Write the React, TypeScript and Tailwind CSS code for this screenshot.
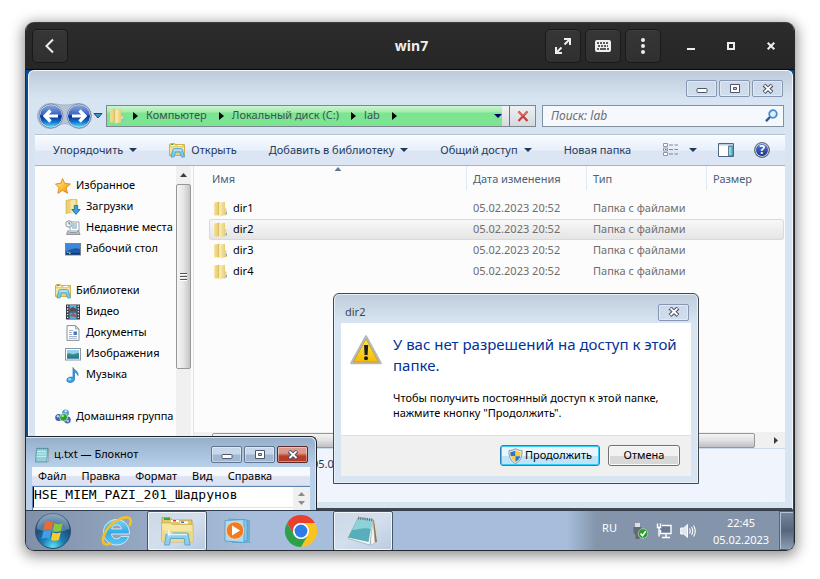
import type { ReactNode } from "react";

const UI = "font-['Noto_Sans','Open_Sans',sans-serif]";

/* ---------- small icons ---------- */

function FolderIcon({ className = "h-4 w-4" }: { className?: string }) {
  return (
    <svg viewBox="0 0 16 16" className={`shrink-0 ${className}`} aria-hidden="true">
      <defs>
        <linearGradient id="leaf" x1="0" y1="0" x2="1" y2="0">
          <stop offset="0" stopColor="#f3df94" />
          <stop offset=".6" stopColor="#ecd27a" />
          <stop offset="1" stopColor="#cfae4a" />
        </linearGradient>
        <linearGradient id="leaf2" x1="0" y1="0" x2="1" y2="0">
          <stop offset="0" stopColor="#fbf0bd" />
          <stop offset="1" stopColor="#e9cd72" />
        </linearGradient>
      </defs>
      <path d="M1.200 1.400 6.500.8v13.500l-5.300.3z" fill="url(#leaf)" />
      <path d="M6.200 1.800 12 .8v13.400l-5.800 1.300z" fill="url(#leaf2)" />
      <path d="M12 1.200v6l1.700 1v5.600l-1.700.4z" fill="#e0bf5c" />
      <path d="M12.500 8.500h1.200v4.500h-1.200z" fill="#f6f6ea" />
      <path d="M12.800 10.800h1v2.200h-1z" fill="#4fa4de" />
    </svg>
  );
}

function LibraryIcon() {
  return (
    <svg viewBox="0 0 16 16" className="h-4 w-4 shrink-0" aria-hidden="true">
      <path d="M.5 2.500 1.500 1.500h4l1 1h9v11H.500z" fill="#e8cd6d" stroke="#c3a442" strokeWidth=".8" />
      <path d="M2 3.500h4M8.500 3.500H13" stroke="#fff" strokeWidth="1.200" />
      <path d="M2.200 2.500h2" stroke="#36a53a" strokeWidth="1.200" />
      <path d="M1 5.200h14v6H1z" fill="#f5e5a0" />
      <path d="M3.500 8.600c0-1.400 1-2 2.200-2h5.800c1.200 0 2.200.600 2.200 2l1.800 6.400h-3l-1.500-4.800H6.500L5 15H2z" fill="#7dcbeb" stroke="#3d93bd" strokeWidth=".7" />
      <path d="M4.500 8h8" stroke="#d8f3fd" strokeWidth="1" />
    </svg>
  );
}

function StarIcon() {
  return (
    <svg viewBox="0 0 16 16" className="h-4 w-4 shrink-0" aria-hidden="true">
      <defs>
        <linearGradient id="star" x1="0" y1="0" x2="1" y2="1">
          <stop offset="0" stopColor="#fff29a" />
          <stop offset=".55" stopColor="#fdbc34" />
          <stop offset="1" stopColor="#ee8a1c" />
        </linearGradient>
      </defs>
      <path d="M7.600.6 9.700 5.400l5.700.6-4.300 3.800 1.500 5.500-5-2.900-4.700 3 1.200-5.600L.5 6l5.200-.6z" fill="url(#star)" stroke="#e08426" strokeWidth=".9" strokeLinejoin="round" />
    </svg>
  );
}

function DownloadsIcon() {
  return (
    <svg viewBox="0 0 16 16" className="h-4 w-4 shrink-0" aria-hidden="true">
      <path d="M1 1.500 5 .6h7v13H5l-4 1z" fill="#ecd170" stroke="#c9a843" strokeWidth=".6" />
      <path d="M5.500 1.500 10.500.8v12.700L5.500 15z" fill="#f6e6a2" />
      <path d="M9.300 6.500h3.400v4h2.500L11 15.400 6.800 10.500h2.500z" fill="#35a2e4" stroke="#15669f" strokeWidth=".8" />
    </svg>
  );
}

function RecentIcon() {
  return (
    <svg viewBox="0 0 16 16" className="h-4 w-4 shrink-0" aria-hidden="true">
      <path d="M5 2h9v9H5z" fill="#fff" stroke="#98a1a9" />
      <path d="M8 4h4M7 6h5M7 8h5" stroke="#5ba3b5" strokeWidth="1" />
      <circle cx="4" cy="4" r="3.200" fill="#f3f6f8" stroke="#8b949d" />
      <path d="M4 2v2h1.600" stroke="#51606c" fill="none" strokeWidth=".9" />
      <path d="m3 10.500-1.500 4h13.500L13.500 10.500l-2 2H5z" fill="#b9bdc2" stroke="#82888e" strokeWidth=".8" />
    </svg>
  );
}

function DesktopIcon() {
  return (
    <svg viewBox="0 0 16 16" className="h-4 w-4 shrink-0" aria-hidden="true">
      <rect x=".5" y="2.500" width="15" height="11.500" fill="#1e56a8" stroke="#768492" />
      <path d="M1 3h14v5C10 6 6 9 1 10z" fill="#3d86d8" />
      <path d="M1 12h14v1.500H1z" fill="#1a3460" />
      <path d="M2 10.500h1.500V12H2z" fill="#79c94f" />
      <path d="M4 11.500h1.500V13H4z" fill="#f0c944" />
    </svg>
  );
}

function VideoIcon() {
  return (
    <svg viewBox="0 0 16 16" className="h-4 w-4 shrink-0" aria-hidden="true">
      <rect x="1" y=".5" width="14" height="15" fill="#343b45" />
      <path d="M4.500 1h7v6.500h-7z" fill="#55b0e4" />
      <path d="M4.500 8.500h7V15h-7z" fill="#4ea9e1" />
      <path d="m4.500 5 3-2 4 2v2.500h-7z" fill="#5b4a56" />
      <path d="m4.500 12 3-3 4 2v2z" fill="#b3543c" />
      <path d="M2.700 1.500v14M13.300 1.500v14" stroke="#e7eef4" strokeWidth="1.300" strokeDasharray="1.400 1.400" />
    </svg>
  );
}

function DocumentIcon() {
  return (
    <svg viewBox="0 0 16 16" className="h-4 w-4 shrink-0" aria-hidden="true">
      <path d="M2 .6h8.500L14 4v11.400H2z" fill="#fdfefe" stroke="#8a9097" />
      <path d="M10.500.6V4H14z" fill="#d6dce2" stroke="#8a9097" strokeWidth=".7" />
      <path d="M4 5.500h4M4 7.500h3M4 9.500h3M4 11.500h8M4 13.300h8" stroke="#9aa6c4" strokeWidth=".9" />
      <path d="M8.500 6.500H12v3.500H8.500z" fill="#3f7fc2" />
    </svg>
  );
}

function PictureIcon() {
  return (
    <svg viewBox="0 0 16 16" className="h-4 w-4 shrink-0" aria-hidden="true">
      <rect x=".5" y="2.500" width="15" height="11.500" fill="#fff" stroke="#8d969f" />
      <rect x="2" y="4" width="12" height="8.500" fill="#8fd1f3" />
      <path d="M2 8c3-2 4 1 7 0s4-1 5-1v5.500H2z" fill="#3c8a78" />
      <path d="M2 10.500h12v2H2z" fill="#2577ad" />
    </svg>
  );
}

function MusicIcon() {
  return (
    <svg viewBox="0 0 16 16" className="h-4 w-4 shrink-0" aria-hidden="true">
      <path d="M8 .5c.5 2.500 5.500 3 5 8-.8-2-2-3-3.500-3.300V12c0 2-1.800 3.500-4.300 3.500-2.200 0-3.400-1-3.400-2.400 0-1.800 2-3 4.300-3 .7 0 1.300.1 1.900.4z" fill="#35a0e3" stroke="#1d73b3" strokeWidth=".7" />
      <ellipse cx="4.700" cy="12.300" rx="1.800" ry="1.100" fill="#a6dcf8" />
    </svg>
  );
}

function HomegroupIcon() {
  return (
    <svg viewBox="0 0 16 16" className="h-4 w-4 shrink-0" aria-hidden="true">
      <circle cx="10.500" cy="4" r="3.500" fill="#5f96dc" />
      <circle cx="3.800" cy="8.500" r="3.600" fill="#3d63bd" />
      <circle cx="12.400" cy="11" r="3.400" fill="#4b66bc" />
      <circle cx="8.600" cy="8.300" r="3.900" fill="#2ba02c" stroke="#e8f4ee" strokeWidth=".7" />
      <circle cx="7.600" cy="6.800" r="1.500" fill="#8fe07d" />
      <circle cx="2.900" cy="7.300" r="1.200" fill="#bcd3f6" />
      <circle cx="10.800" cy="2.300" r="1.200" fill="#cfe2fa" />
      <circle cx="12.800" cy="12" r="1.200" fill="#a7bdec" />
    </svg>
  );
}

function Caret({ className = "text-[#1e395b]" }: { className?: string }) {
  return (
    <svg viewBox="0 0 8 4" className={`h-1 w-2 shrink-0 ${className}`} aria-hidden="true">
      <path d="M0 0h8L4 4z" fill="currentColor" />
    </svg>
  );
}

/* ---------- window caption buttons ---------- */

type Glyph = "min" | "max" | "close";

function CaptionGlyph({ kind }: { kind: Glyph }) {
  return (
    <svg viewBox="0 0 12 10" className="h-[10px] w-3" aria-hidden="true">
      {kind === "min" && <rect x="1" y="4.500" width="10" height="4" rx=".8" fill="#fff" stroke="#4e5569" />}
      {kind === "max" && (
        <>
          <path d="M1.500.5h9v8h-9z" fill="#fff" stroke="#4e5569" />
          <path d="M4.500 3.500h3v2h-3z" fill="#c3d0e3" stroke="#4e5569" />
        </>
      )}
      {kind === "close" && (
        <>
          <path d="m2 1 8 7.500M10 1 2 8.500" stroke="#4e5569" strokeWidth="4" />
          <path d="m2.500 1.400 7 6.600M9.500 1.400 2.500 8" stroke="#fff" strokeWidth="1.900" />
        </>
      )}
    </svg>
  );
}

function CaptionButton({ kind, label, tone = "pale" }: { kind: Glyph; label: string; tone?: "pale" | "active" | "red" }) {
  const tones = {
    pale: "border-[#8796b3] bg-linear-to-b from-[#cdd9e7] to-[#cfdded]",
    active: "border-[#63768f] bg-linear-to-b from-[#c8d8ea] from-45% to-[#9fb9d5] to-55%",
    red: "border-[#5b2a2c] bg-linear-to-b from-[#dc9a8c] from-40% to-[#b93c26] to-60%",
  };
  return (
    <button type="button" aria-label={label} className={`flex h-[17px] w-[31px] items-center justify-center rounded-[2px] border shadow-[inset_0_0_0_1px_#ffffff66] ${tones[tone]}`}>
      <CaptionGlyph kind={kind} />
    </button>
  );
}

/* ---------- viewer header ---------- */

function HeaderButton({ label, children }: { label: string; children: ReactNode }) {
  return (
    <button type="button" aria-label={label} className="flex h-[34px] w-9 items-center justify-center rounded-[5px] border border-[#191919] bg-linear-to-b from-[#363636] to-[#303030] text-[#eeeeec] shadow-[inset_0_1px_#3c3c3c]">
      {children}
    </button>
  );
}

function ViewerHeader() {
  return (
    <header className="grid h-12 grid-cols-[1fr_auto_1fr] items-center border-t border-b border-t-[#3c3c3c] border-b-[#080808] bg-linear-to-b from-[#2c2c2c] to-[#262626] pr-[3px] pl-[6px] text-[#eeeeec]">
      <div>
        <HeaderButton label="Back">
          <svg viewBox="0 0 16 16" className="h-4 w-4" aria-hidden="true">
            <path d="M11 1.500 4.500 8l6.500 6.500" fill="none" stroke="currentColor" strokeWidth="2" />
          </svg>
        </HeaderButton>
      </div>
      <h1 className="text-[14px] leading-5 font-bold">win7</h1>
      <div className="flex items-center justify-end">
        <div className="flex gap-1">
          <HeaderButton label="Fullscreen">
            <svg viewBox="0 0 16 16" className="h-4 w-4" fill="none" stroke="currentColor" strokeWidth="2" aria-hidden="true">
              <path d="M9 1h6v6M15 1 9.500 6.500M7 15H1V9M1 15l5.500-5.500" />
            </svg>
          </HeaderButton>
          <HeaderButton label="Keyboard">
            <svg viewBox="0 0 16 16" className="h-4 w-4" aria-hidden="true">
              <rect y="2" width="16" height="12" rx="2" fill="currentColor" />
              <path d="M2 5h2m1 0h2m1 0h2m1 0h2M3 8h2m1 0h2m1 0h2m1 0h1M2 11h2m1 0h6m1 0h2" stroke="#2b2b2b" strokeWidth="1.600" />
            </svg>
          </HeaderButton>
          <HeaderButton label="Menu">
            <svg viewBox="0 0 16 16" className="h-4 w-4" fill="currentColor" aria-hidden="true">
              <circle cx="8" cy="2" r="2" />
              <circle cx="8" cy="8" r="2" />
              <circle cx="8" cy="14" r="2" />
            </svg>
          </HeaderButton>
        </div>
        <div className="ml-[10px] flex">
          <button type="button" aria-label="Minimize" className="flex h-9 w-10 items-center justify-center">
            <span className="mt-[6px] h-[2px] w-2 bg-current" />
          </button>
          <button type="button" aria-label="Maximize" className="flex h-9 w-10 items-center justify-center">
            <span className="h-2 w-2 border-2 border-current" />
          </button>
          <button type="button" aria-label="Close" className="flex h-9 w-10 items-center justify-center">
            <svg viewBox="0 0 8 8" className="h-2 w-2" aria-hidden="true">
              <path d="m.7.7 6.600 6.600M7.300.7.7 7.300" stroke="currentColor" strokeWidth="2" />
            </svg>
          </button>
        </div>
      </div>
    </header>
  );
}

/* ---------- explorer ---------- */

function NavOrbs() {
  return (
    <svg viewBox="0 0 56 26" className="h-[26px] w-14" aria-hidden="true">
      <defs>
        <linearGradient id="orb" x1="0" y1="0" x2="0" y2="1">
          <stop offset="0" stopColor="#8fa9dc" />
          <stop offset=".45" stopColor="#3561bd" />
          <stop offset=".5" stopColor="#0a2f8c" />
          <stop offset=".75" stopColor="#1173cf" />
          <stop offset="1" stopColor="#5fe3fb" />
        </linearGradient>
      </defs>
      <path d="M13 .5c6 0 8 1.500 15 1.500S37 .5 42 .5a12.500 12.500 0 0 1 0 25c-6 0-8-5-14-5s-8 5-15 5a12.500 12.500 0 0 1 0-25z" fill="#b7c4d6" stroke="#a3b2c8" />
      <circle cx="14" cy="13" r="11.500" fill="url(#orb)" stroke="#e0ecfa" />
      <circle cx="42" cy="13" r="11.500" fill="url(#orb)" stroke="#e0ecfa" />
      <circle cx="14" cy="13" r="12" fill="none" stroke="#4f6590" strokeWidth=".6" />
      <circle cx="42" cy="13" r="12" fill="none" stroke="#4f6590" strokeWidth=".6" />
      <path d="M21 13H8.500M13.500 7.500 8 13l5.500 5.500M35 13h12.500M42.500 7.500 48 13l-5.500 5.500" fill="none" stroke="#fff" strokeWidth="3.200" />
    </svg>
  );
}

function AddressBar() {
  const crumbs = ["Компьютер", "Локальный диск (C:)", "lab"];
  return (
    <nav aria-label="Адрес" className="flex h-[22px] flex-[428_1_0%] border border-[#7c8791] bg-linear-to-b from-[#f2f4f5] to-[#d6dbe0]">
      <div className="flex flex-1 items-center bg-linear-to-b from-[#cbf4d0] via-[#a3ecae] via-30% to-[#7ce591] to-35% pl-[2px] text-[11px] text-[#3f5056]">
        <FolderIcon />
        {crumbs.map((c) => (
          <span key={c} className="flex items-center">
            <svg viewBox="0 0 5 8" className="mr-2 ml-2 h-2 w-[5px]" aria-hidden="true">
              <path d="M0 0v8l5-4z" />
            </svg>
            <a href="#" className="mr-1 whitespace-nowrap">{c}</a>
          </span>
        ))}
        <svg viewBox="0 0 5 8" className="ml-2 h-2 w-[5px]" aria-hidden="true">
          <path d="M0 0v8l5-4z" />
        </svg>
        <button type="button" aria-label="Предыдущие расположения" className="ml-auto flex h-5 w-2 items-center">
          <Caret className="text-[#00006a]" />
        </button>
      </div>
      <span className="w-[7px]" />
      <button type="button" aria-label="Остановить" className="flex w-[26px] items-center justify-center border-l border-[#6f7478] bg-linear-to-b from-[#eef0f1] to-[#d4d9de]">
        <svg viewBox="0 0 12 12" className="h-3 w-3" aria-hidden="true">
          <path d="m1.500 1.500 9 9.500M10.500 1.500l-9 9.500" stroke="#c93b38" strokeWidth="2.200" />
          <path d="m1.500 1.500 4 4M10.500 1.500l-4 4" stroke="#e5736c" strokeWidth="1.200" />
        </svg>
      </button>
    </nav>
  );
}

function Toolbar() {
  const item = "flex h-full items-center gap-[6px] whitespace-nowrap";
  return (
    <div className="flex h-8 items-center border-t border-b border-t-[#b4c3d5] border-b-[#a3b3ca] bg-linear-to-b from-[#fafcff] via-[#e7effa] via-50% to-[#dbe5f3] to-55% pr-[15px] pl-[18px] text-[11px] text-[#1e395b] shadow-[inset_0_1px_#fff]">
      <button type="button" className={item}>Упорядочить <Caret /></button>
      <button type="button" className={`${item} ml-8`}><LibraryIcon /> Открыть</button>
      <button type="button" className={`${item} ml-8`}>Добавить в библиотеку <Caret /></button>
      <button type="button" className={`${item} ml-8`}>Общий доступ <Caret /></button>
      <button type="button" className={`${item} ml-8`}>Новая папка</button>
      <div className="ml-auto flex items-center">
        <button type="button" aria-label="Вид" className="flex items-center gap-[10px]">
          <svg viewBox="0 0 16 14" className="h-[14px] w-4" aria-hidden="true">
            <path d="M.5.500h4v3h-4zM.500 5h4v3h-4zM.500 9.500h4v3h-4z" fill="#fff" stroke="#8b97a8" />
            <path d="M2 6h1.500v1H2z" fill="#c54733" />
            <path d="M6 2h4M11.500 2H15M6 6.500h4M11.500 6.500H15M6 11h4M11.500 11H15" stroke="#7787a0" />
          </svg>
          <Caret />
        </button>
        <button type="button" aria-label="Область просмотра" className="ml-[21px]">
          <svg viewBox="0 0 16 14" className="h-[14px] w-4" aria-hidden="true">
            <path d="M.5.500h15v13H.5z" fill="#fff" stroke="#4d6782" />
            <path d="M1 1h14v1.500H1z" fill="#b9cde0" />
            <path d="M10.500 3h4.500v10h-4.500z" fill="#59bedb" stroke="#4d6782" strokeWidth=".8" />
            <path d="M12 4v8" stroke="#bdeaf5" />
          </svg>
        </button>
        <button type="button" aria-label="Справка" className="ml-5 flex h-4 w-4 items-center justify-center rounded-full border border-[#6c727c] bg-[#2349b0] bg-linear-to-b from-[#5a80dd] to-[#142f86] text-[12px] leading-none font-bold text-white shadow-[inset_0_0_0_1px_#c9cfd8]">
          ?
        </button>
      </div>
    </div>
  );
}

type NavGroup = { title: string; icon: ReactNode; items: { name: string; icon: ReactNode }[] };

const navGroups: NavGroup[] = [
  {
    title: "Избранное",
    icon: <StarIcon />,
    items: [
      { name: "Загрузки", icon: <DownloadsIcon /> },
      { name: "Недавние места", icon: <RecentIcon /> },
      { name: "Рабочий стол", icon: <DesktopIcon /> },
    ],
  },
  {
    title: "Библиотеки",
    icon: <LibraryIcon />,
    items: [
      { name: "Видео", icon: <VideoIcon /> },
      { name: "Документы", icon: <DocumentIcon /> },
      { name: "Изображения", icon: <PictureIcon /> },
      { name: "Музыка", icon: <MusicIcon /> },
    ],
  },
  { title: "Домашняя группа", icon: <HomegroupIcon />, items: [] },
];

function NavPane() {
  return (
    <div className="flex w-[159px] shrink-0 border-r border-[#d6e5f5] bg-[#fcfcfc]">
      <div className="flex flex-1 flex-col gap-[21px] overflow-hidden pt-[9px] pb-[21px] pl-5 text-[11px] text-black">
        {navGroups.map((g) => (
          <div key={g.title}>
            <a href="#" className="flex h-[21px] items-center gap-[5px] whitespace-nowrap">{g.icon}<span>{g.title}</span></a>
            {g.items.map((it) => (
              <a key={it.name} href="#" className="flex h-[21px] items-center gap-[5px] pl-[10px] whitespace-nowrap">{it.icon}<span>{it.name}</span></a>
            ))}
          </div>
        ))}
      </div>
      <div className="mr-[2px] flex w-[15px] shrink-0 flex-col bg-[#f0f0f0]">
        <span className="flex h-[18px] items-center justify-center">
          <svg viewBox="0 0 7 4" className="h-1 w-[7px]" aria-hidden="true"><path d="M0 4h7L3.500 0z" fill="#3c3c3c" /></svg>
        </span>
        <span className="flex h-[185px] flex-col items-center justify-center gap-px rounded-[2px] border border-[#979797] bg-linear-to-r from-[#f5f5f5] via-[#e6e6e7] to-[#c3c4c8]">
          <i className="h-[2px] w-[7px] border-b border-white bg-[#555]" />
          <i className="h-[2px] w-[7px] border-b border-white bg-[#555]" />
          <i className="h-[2px] w-[7px] border-b border-white bg-[#555]" />
        </span>
      </div>
    </div>
  );
}

const files = ["dir1", "dir2", "dir3", "dir4"];

function FileList() {
  const th = "relative h-6 border-r border-[#dfeaf7] p-0 pt-[2px] pl-[6px] text-left font-normal";
  return (
    <div className="flex min-w-0 flex-1 flex-col bg-[#fcfcfc] text-[11px]">
      <div className="overflow-hidden pr-px pl-[15px]">
        <table className="w-full table-fixed border-separate border-spacing-0">
          <colgroup>
            <col className="w-[258px]" />
            <col className="w-[120px]" />
            <col className="w-[120px]" />
            <col />
          </colgroup>
          <thead className="text-[#4c607a]">
            <tr>
              <th className="relative h-6 border-r border-[#dfeaf7] p-0 pt-[2px] pl-[3px] text-left font-normal">
                Имя
                <svg viewBox="0 0 7 4" className="absolute top-px left-1/2 h-1 w-[7px] -translate-x-1/2" aria-hidden="true"><path d="M0 4h7L3.500 0z" fill="#5c7b9c" /></svg>
              </th>
              <th className={th}>Дата изменения</th>
              <th className={th}>Тип</th>
              <th className="h-6 p-0 pt-[2px] pl-[6px] text-left font-normal">Размер</th>
            </tr>
            <tr aria-hidden="true"><td className="h-2 p-0" /></tr>
          </thead>
          <tbody>
            {files.map((f) => {
              const on = f === "dir2";
              const cell = on ? "border-y border-[#d9d9d9] bg-linear-to-b from-[#f8f8f8] to-[#e5e5e5]" : "border-y border-transparent";
              return (
                <tr key={f} className="h-[21px]">
                  <td className={`${cell} rounded-l-[3px] border-l p-0 pl-[3px] text-black`}>
                    <span className="flex h-[19px] items-center gap-1"><FolderIcon />{f}</span>
                  </td>
                  <td className={`${cell} p-0 pl-[6px] text-[#6d6d6d]`}>05.02.2023 20:52</td>
                  <td className={`${cell} p-0 pl-[6px] text-[#6d6d6d]`}>Папка с файлами</td>
                  <td className={`${cell} rounded-r-[3px] border-r p-0`} />
                </tr>
              );
            })}
          </tbody>
        </table>
      </div>
      <div className="mt-auto flex h-4 items-center bg-[#f0f0f0]">
        <span className="ml-[18px] h-[15px] flex-1 rounded-[2px] border border-[#979797] bg-linear-to-b from-[#f4f4f4] via-[#e0e0e1] to-[#bfc0c4]" />
        <span className="flex w-[30px] items-center justify-end pr-[7px]">
          <svg viewBox="0 0 4 7" className="h-[7px] w-1" aria-hidden="true"><path d="M0 0v7l4-3.500z" fill="#3c3c3c" /></svg>
        </span>
      </div>
    </div>
  );
}

function Explorer() {
  return (
    <section aria-label="lab" className="mr-px ml-[2px] rounded-t-[6px] border border-b-2 border-[#f3f7fb] border-b-[#45474c] bg-[#d7e4f1] bg-linear-to-b from-[#becbda] to-[#d7e4f1] to-[28px] pr-[7px] pb-[6px] pl-[6px]">
      <div className="flex justify-end gap-[2px] pt-[9px] pr-[2px]">
        <CaptionButton kind="min" label="Свернуть" />
        <CaptionButton kind="max" label="Развернуть" />
        <CaptionButton kind="close" label="Закрыть" />
      </div>
      <div className="flex h-[37px] items-center pr-px pl-[2px]">
        <button type="button" aria-label="Назад и вперёд"><NavOrbs /></button>
        <svg viewBox="0 0 10 6" className="mr-[3px] h-[6px] w-[10px]" aria-hidden="true">
          <path d="M1 .5h8L5 5z" fill="#3f93cc" stroke="#26486f" />
        </svg>
        <AddressBar />
        <label className="ml-[6px] flex h-[22px] flex-[227_1_0%] items-center border border-[#8491a1] bg-[#f5f9fd] pr-[5px] pl-2">
          <input aria-label="Поиск" placeholder="Поиск: lab" className="w-full min-w-0 bg-transparent text-[12px] italic outline-none placeholder:text-[#6d6d6d]" />
          <svg viewBox="0 0 13 13" className="h-[13px] w-[13px] shrink-0" aria-hidden="true">
            <circle cx="8" cy="5" r="3.800" fill="#dff0fc" stroke="#3f8fd2" strokeWidth="1.800" />
            <path d="m5 8-4 4.200" stroke="#2a58a5" strokeWidth="2.400" />
          </svg>
        </label>
      </div>
      <Toolbar />
      <div className="flex">
        <NavPane />
        <FileList />
      </div>
      <div className="h-[54px] border-t border-[#cddcec] bg-[#f0f4fc] pt-[6px] pl-[277px] text-[11px] leading-[18px] text-[#1e395b]">05.02.2023</div>
    </section>
  );
}

/* ---------- access dialog ---------- */

function AccessDialog() {
  return (
    <div role="dialog" aria-label="dir2" className="absolute top-[223px] left-[307px] w-[366px] rounded-t-[6px] border border-[#44484e] bg-linear-to-b from-[#becddc] to-[#d7e4f1] to-[28px] px-[7px] pb-[7px] shadow-[inset_0_0_0_1px_#e9f1f8]">
      <div className="flex h-[29px] items-center justify-between pt-[7px] pr-[2px] pl-1 text-[11px] text-[#3a4654]">
        <span>dir2</span>
        <CaptionButton kind="close" label="Закрыть" />
      </div>
      <div className="flex gap-[11px] border-b border-[#dfdfdf] bg-white pt-[11px] pb-[15px] pl-[9px]">
        <svg viewBox="0 0 32 32" className="h-8 w-8 shrink-0" aria-hidden="true">
          <defs>
            <linearGradient id="warn" x1="0" y1="0" x2="0" y2="1">
              <stop offset="0" stopColor="#fdf05a" />
              <stop offset="1" stopColor="#f5b800" />
            </linearGradient>
          </defs>
          <path d="M16 2.500 30.500 29h-29z" fill="url(#warn)" stroke="#b5b8bc" strokeWidth="2.600" strokeLinejoin="round" />
          <path d="M16 5 28.500 28h-25z" fill="none" stroke="#d09a00" strokeWidth=".7" />
          <path d="M14 11h4.200l-.6 10h-3z" fill="#1d1d1d" />
          <circle cx="16" cy="24.300" r="2" fill="#1d1d1d" />
        </svg>
        <div className="min-w-0 flex-1 pr-1">
          <p className="text-[15px] leading-[21px] text-[#003399]">У вас нет разрешений на доступ к этой папке.</p>
          <p className="mt-[14px] text-[11px] leading-[15px] text-black">Чтобы получить постоянный доступ к этой папке, нажмите кнопку "Продолжить".</p>
        </div>
      </div>
      <div className="flex justify-end gap-2 bg-[#f0f0f0] pt-[9px] pr-[11px] pb-[10px] text-[11px] text-black">
        <button type="button" className="flex h-[21px] w-[100px] items-center justify-center gap-[2px] rounded-[3px] border border-[#2c7fb8] bg-linear-to-b from-[#eaf6fd] from-50% to-[#bfe3f7] to-55% whitespace-nowrap shadow-[inset_0_0_0_1px_#35cdf8]">
          <svg viewBox="0 0 15 16" className="h-4 w-[15px] shrink-0" aria-hidden="true">
            <path d="M7.500.7C9.500 2 11.500 2.500 14 2.500c.4 6-1.500 10.500-6.500 13C2.500 13 .6 8.500 1 2.500c2.500 0 4.500-.5 6.500-1.800z" fill="#e9edf2" stroke="#8c949e" />
            <path d="M7.500 2.600v5.600H2.700C2.300 6.500 2.300 5 2.400 3.900c2 0 3.600-.4 5.100-1.300z" fill="#3173c6" />
            <path d="M7.500 2.600v5.600h4.800c.4-1.700.4-3.200.3-4.300-2 0-3.600-.4-5.100-1.300z" fill="#f7cf3c" />
            <path d="M2.700 8.200h4.800v5.700c-2.500-1.300-4-3.200-4.800-5.700z" fill="#f7cf3c" />
            <path d="M12.300 8.200H7.500v5.700c2.500-1.300 4-3.200 4.800-5.700z" fill="#3173c6" />
          </svg>
          Продолжить
        </button>
        <button type="button" className="h-[21px] w-[72px] rounded-[3px] border border-[#707070] bg-linear-to-b from-[#f1f1f1] from-50% to-[#d8d8d8] to-55% shadow-[inset_0_0_0_1px_#fafafa]">Отмена</button>
      </div>
    </div>
  );
}

/* ---------- notepad ---------- */

function Notepad() {
  return (
    <section aria-label="Блокнот" className="absolute bottom-0 -left-px w-[292px] rounded-tr-[6px] border border-b-0 border-[#22262b] bg-linear-to-b from-[#94aeca] to-[#b9d0ea] to-[30px] px-[6px] shadow-[inset_-1px_1px_#d5e7f5]">
      <div className="flex h-[30px] items-center pt-[5px] pr-[2px] pl-[2px] text-[11px] text-black">
        <svg viewBox="0 0 16 16" className="mr-1 h-4 w-4" aria-hidden="true">
          <path d="M2.500 1.500h11.500l-1 13.500H1.500z" fill="#8fd0da" stroke="#5b8e99" strokeWidth=".8" />
          <path d="M14 1.500l.8 13L13 15z" fill="#e8ecef" stroke="#777" strokeWidth=".5" />
          <path d="M3 4.500h9M3 7h9M2.700 9.500H12" stroke="#c4ecf0" />
          <path d="M3 1.500h11" stroke="#74808a" strokeWidth="1.600" strokeDasharray="1 1" />
        </svg>
        <span className="flex-1">ц.txt — Блокнот</span>
        <div className="flex gap-[2px]">
          <CaptionButton kind="min" label="Свернуть" tone="active" />
          <CaptionButton kind="max" label="Развернуть" tone="active" />
          <CaptionButton kind="close" label="Закрыть" tone="red" />
        </div>
      </div>
      <div className="flex h-[19px] items-center justify-start gap-[15px] border-b border-[#cfd5e4] bg-linear-to-b from-[#f6f9fd] from-45% to-[#dde3f2] to-55% pl-[6px] text-[11px] text-black">
        {["Файл", "Правка", "Формат", "Вид", "Справка"].map((m) => (
          <button key={m} type="button">{m}</button>
        ))}
      </div>
      <div className="flex h-6 border-t border-l border-[#5f84b0] bg-white">
        <textarea aria-label="Текст" spellCheck={false} rows={1} defaultValue="HSE_MIEM_PAZI_201_Шадрунов" className="h-[21px] min-w-0 flex-1 resize-none overflow-hidden border-b border-l border-b-[#e3e3e3] border-l-black bg-white font-['DejaVu_Sans_Mono',monospace] text-[13px] leading-4 text-black outline-none" />
        <span className="flex w-[17px] flex-col items-center justify-between bg-[#f0f0f0] py-[5px]">
          <svg viewBox="0 0 7 4" className="h-1 w-[7px]" aria-hidden="true"><path d="M0 4h7L3.500 0z" fill="#8c8c8c" /></svg>
          <svg viewBox="0 0 7 4" className="h-1 w-[7px]" aria-hidden="true"><path d="M0 0h7L3.500 4z" fill="#8c8c8c" /></svg>
        </span>
      </div>
    </section>
  );
}

/* ---------- taskbar ---------- */

function StartOrb() {
  return (
    <svg viewBox="0 0 38 38" className="h-[38px] w-[38px]" aria-hidden="true">
      <defs>
        <radialGradient id="start" cx=".5" cy=".95" r=".9">
          <stop offset="0" stopColor="#59e2f8" />
          <stop offset=".35" stopColor="#1c7db5" />
          <stop offset=".7" stopColor="#1d4f7d" />
          <stop offset="1" stopColor="#5f86a8" />
        </radialGradient>
      </defs>
      <circle cx="19" cy="19" r="17.500" fill="url(#start)" stroke="#2f4a68" />
      <path d="M3 17a16 16 0 0 1 32 0c-8 4-22 4-32 0z" fill="#fff" opacity=".25" />
      <path d="M11 10.500c3-1.700 5.500-1.500 8 0l-1.500 7.500c-2.500-1.500-5-1.500-8 0z" fill="#ed6a30" />
      <path d="M20.300 11.200c2.700 1.400 5.400 1.300 8.300 0L27 18.800c-2.800 1.300-5.500 1.300-8.200 0z" fill="#8cc63f" />
      <path d="M9.200 19.500c3-1.500 5.500-1.400 8 0L15.600 27c-2.500-1.500-5-1.500-8 0z" fill="#3fa0e4" />
      <path d="M18.500 20.200c2.700 1.400 5.400 1.300 8.300 0L25 27.800c-2.800 1.300-5.500 1.300-8 0z" fill="#fbca2b" />
    </svg>
  );
}

function IEIcon() {
  return (
    <svg viewBox="0 0 32 32" className="h-8 w-8" aria-hidden="true">
      <defs>
        <linearGradient id="ie" x1="0" y1="0" x2="0" y2="1">
          <stop offset="0" stopColor="#7ed3f7" />
          <stop offset=".5" stopColor="#35ace8" />
          <stop offset="1" stopColor="#55c8f4" />
        </linearGradient>
      </defs>
      <path d="M29.500 19H11.500c.3 3 2.300 4.800 5 4.800 2 0 3.500-.8 4.500-2.400h7.700C27 26.500 22.800 30 16.500 30 9.300 30 3.500 25 3.500 17.300S9.500 4.500 16.700 4.500 29.500 10 29.500 19zm-17.800-5.100h9.800c-.3-2.600-2.200-4-4.800-4s-4.500 1.500-5 4z" fill="url(#ie)" stroke="#e9f8ff" strokeWidth=".8" />
      <path d="M29.500 11c2-4.500 1.500-8-1.500-8.500-5.500-1-16.500 5-22 13.500-4 6.300-4.500 13 .5 13.500 1.500 0 3-.5 4.500-1.300" fill="none" stroke="#f4c02a" strokeWidth="2.600" />
    </svg>
  );
}

function ExplorerTaskIcon() {
  return (
    <svg viewBox="0 0 34 30" className="h-[30px] w-[34px]" aria-hidden="true">
      <path d="M2 4V1.500h8L12 4h20v21H2z" fill="#e3c76b" stroke="#b59843" strokeWidth=".8" />
      <path d="M4 2h6v2H4z" fill="#2caa3c" />
      <path d="M11 4h8v2h-8z" fill="#fff" /><path d="M13 4h3v1.500h-3z" fill="#d93a2b" />
      <path d="M20 5.500h8v2h-8z" fill="#fff" /><path d="M21 5.500h3V7h-3z" fill="#2a7dd2" />
      <path d="M1.500 7h9l2 1.500h20.500v17.500h-31z" fill="#f7e6a1" stroke="#c9ad55" strokeWidth=".7" />
      <path d="M1.800 15h31v10.500h-31z" fill="#eed78a" />
      <path d="M6 19c0-1.500 1-2 2.300-2h18c1.200 0 2.200.5 2.200 2l1.500 10h-5l-.8-6.500h-13.700L9.500 29h-5z" fill="#8ad0ee" stroke="#4c9ec6" strokeWidth=".8" />
      <path d="M8 18.500h19" stroke="#dcf4fd" strokeWidth="1.300" />
      <path d="m9 12 .8 4.200 4.200.8-4.200.8L9 22l-.8-4.200L4 17l4.200-.8z" fill="#fff" opacity=".85" />
    </svg>
  );
}

function PlayerIcon() {
  return (
    <svg viewBox="0 0 30 28" className="h-7 w-[30px]" aria-hidden="true">
      <path d="m8 2 18 1v22l2 1H8z" fill="#67a8ce" opacity=".8" />
      <path d="m5 2 18 1v21H5z" fill="#8cc9e8" stroke="#4d98c4" strokeWidth=".7" />
      <path d="M1 3.500 20 2.500v23L1 24z" fill="#a9dbf2" stroke="#4d98c4" strokeWidth=".8" />
      <circle cx="11" cy="13.500" r="8.800" fill="#f07b22" stroke="#fbd9b8" />
      <path d="m8 8.500 8 5-8 5z" fill="#fff" />
    </svg>
  );
}

function ChromeIcon() {
  return (
    <svg viewBox="0 0 32 32" className="h-8 w-8" aria-hidden="true">
      <path d="M16 8h13.860A16 16 0 0 1 16 32l6.930-12z" fill="#fcc31e" />
      <path d="M2.140 8A16 16 0 0 1 29.860 8H16a8 8 0 0 0-6.930 12z" fill="#e8402f" />
      <path d="M2.140 8 9.070 20A8 8 0 0 0 22.930 20L16 32A16 16 0 0 1 2.140 8z" fill="#2da04b" />
      <circle cx="16" cy="16" r="8" fill="#fff" />
      <circle cx="16" cy="16" r="6.400" fill="#2f7bea" />
    </svg>
  );
}

function NotepadTaskIcon() {
  return (
    <svg viewBox="0 0 32 30" className="h-[30px] w-8" aria-hidden="true">
      <path d="m27 4 3 22-4 .5-2-20z" fill="#9a7440" />
      <path d="m26 3.500 2 23-4 3-2-22z" fill="#f3f4f3" stroke="#9b9b9b" strokeWidth=".5" />
      <path d="m11 2 15 2-3 25L1 22.500z" fill="#f3f7f8" stroke="#8c9ba1" strokeWidth=".6" />
      <path d="m11 2 14.500 2-4 22L1 21.500z" fill="#58aebb" />
      <path d="m11 2 14.500 2-1.500 9C17 11 11 14 5 14z" fill="#9bdbe1" opacity=".8" />
      <path d="m11 2 15 2" stroke="#6c7075" strokeWidth="2.600" strokeDasharray="1.200 1" />
    </svg>
  );
}

function Taskbar() {
  const running = "flex h-10 w-[60px] items-center justify-center rounded-[2px] border border-[#46566b] bg-linear-to-br from-[#ccd8e6] via-[#d3dfec] to-[#b9cbe0] shadow-[inset_0_0_0_1px_#f0f5fb]";
  return (
    <footer className="flex h-10 items-stretch border-t border-[#2f3d50] bg-linear-to-r from-[#8090a8] via-[#a6bedb] via-[220px] to-[#a6bedb] text-white">
      <div className="flex items-center pl-2">
        <button type="button" aria-label="Пуск"><StartOrb /></button>
        <button type="button" aria-label="Internet Explorer" className="ml-7"><IEIcon /></button>
        <button type="button" aria-label="Проводник" className={`${running} ml-[15px]`}><ExplorerTaskIcon /></button>
        <button type="button" aria-label="Проигрыватель" className="ml-[17px]"><PlayerIcon /></button>
        <button type="button" aria-label="Chrome" className="ml-[31px]"><ChromeIcon /></button>
        <button type="button" aria-label="Блокнот" className={`${running} ml-4`}><NotepadTaskIcon /></button>
      </div>
      <div className="ml-auto flex items-center bg-linear-to-r from-[#8394ab00] to-[#8394ab] to-[30px] pl-[35px]">
        <span className="mb-1 text-[11px]">RU</span>
        <svg viewBox="0 0 16 16" className="ml-[15px] h-4 w-4" aria-hidden="true">
          <path d="M3 0h5v4H3z" fill="#dcdfe2" />
          <path d="M1.500 4h8v6l-2 2v4h-4v-4l-2-2z" fill="#636a71" />
          <circle cx="11" cy="10.500" r="4.800" fill="#2b9c31" stroke="#c7e7c6" strokeWidth=".6" />
          <path d="m8.500 10.500 2 2.200 3.200-4.500" fill="none" stroke="#fff" strokeWidth="1.500" />
        </svg>
        <svg viewBox="0 0 16 16" className="ml-2 h-4 w-4" aria-hidden="true" fill="none" stroke="#fff">
          <path d="M6 2.500h9v8H4.500V7" fill="#697b92" strokeWidth="1.400" />
          <path d="M1.500.500v4h3v-4M3 4.500v9M6 14.500h8M10 11v3" strokeWidth="1.400" />
        </svg>
        <svg viewBox="0 0 16 16" className="ml-2 h-4 w-4" aria-hidden="true" fill="none" stroke="#fff">
          <path d="M.700 5h3L7.500 1.500v13L3.700 11h-3z" fill="#dfe5ec" stroke="#fff" />
          <path d="M9.500 5.500q1.500 2.500 0 5M11.500 4q2.500 4 0 8M13.500 2.500q3.500 5.500 0 11" strokeWidth="1.100" />
        </svg>
        <time className="ml-4 w-[58px] text-center text-[11px] leading-[17px] whitespace-nowrap">22:45<br />05.02.2023</time>
        <button type="button" aria-label="Свернуть все окна" className="ml-[9px] h-full w-[15px] border border-[#55657b] bg-linear-to-b from-[#76879e] via-[#56677d] to-[#8c9db6] shadow-[inset_1px_1px_#b6c3d4]" />
      </div>
    </footer>
  );
}

export default function App() {
  return (
    <main className={`min-h-screen bg-white px-[25px] pt-[22px] pb-7 ${UI}`}>
      <div className="overflow-hidden rounded-[9px] border-x border-b border-[#252a31] shadow-[0_3px_14px_2px_#00000070]">
        <ViewerHeader />
        <div className="bg-[#0c4a94]">
          <div className="relative">
            <Explorer />
            <AccessDialog />
            <Notepad />
          </div>
          <Taskbar />
        </div>
      </div>
    </main>
  );
}
